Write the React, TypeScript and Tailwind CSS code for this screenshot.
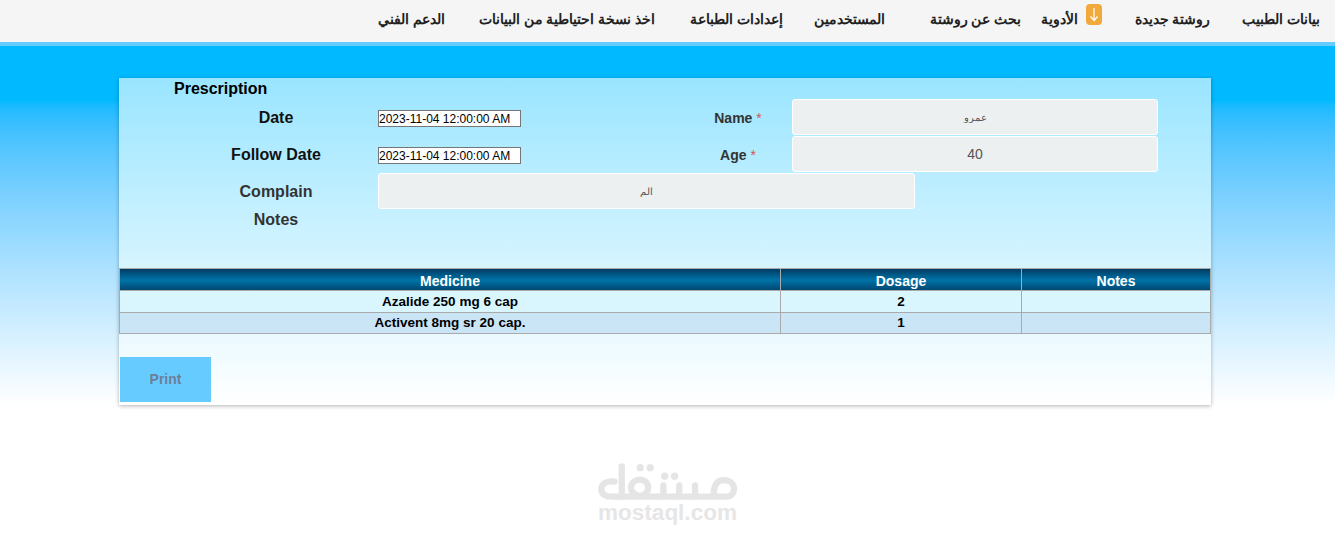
const navItems = [
  { label: "بيانات الطبيب", cls: "w-[82px] ml-[27px] justify-center" },
  { label: "روشتة جديدة", cls: "w-[81px] ml-[30px] justify-center" },
  { label: "الأدوية", cls: "w-[66px] ml-[25px] justify-start", badge: true },
  { label: "بحث عن روشتة", cls: "w-[71px] ml-[55px] justify-center" },
  { label: "المستخدمين", cls: "w-[72px] ml-[28px] justify-center" },
  { label: "إعدادات الطباعة", cls: "w-[97px] ml-[27px] justify-center" },
  { label: "اخذ نسخة احتياطية من البيانات", cls: "w-[188px] ml-[28px] justify-center" },
  { label: "الدعم الفني", cls: "w-[67px] justify-center" },
];

function DateField() {
  return (
    <input
      readOnly
      value="2023-11-04 12:00:00 AM"
      className="h-[17px] w-[143px] border border-[#767676] bg-white px-0 text-[12px] text-black outline-none"
    />
  );
}

function Field({ value, small, wide }: { value: string; small?: boolean; wide?: boolean }) {
  return (
    <input
      readOnly
      value={value}
      className={`${wide ? "w-[537px]" : "w-[366px]"} h-[36px] rounded-[3px] border border-white bg-[#ecf0f1] text-center text-[#555] outline-none ${
        small ? "text-[10px]" : "text-[14px]"
      }`}
    />
  );
}

function Logo() {
  return (
    <svg viewBox="50 28 424 124" className="h-[41px] w-[140px]" fill="none" stroke="#e5e5e5" strokeWidth="19" strokeLinecap="round" strokeLinejoin="round">
      <path d="M100 84C72 80 60 94 60 108C60 122 72 130 92 130H438C455 130 462 118 462 106C462 90 448 80 430 80C412 80 400 92 400 130" />
      <path d="M122 38V130" />
      <path d="M178 128C158 124 150 114 150 102C150 90 162 78 176 78C192 78 202 90 202 102C202 114 196 124 178 128" />
      <path d="M248 96V130M296 96V130M344 96V130" />
      <g fill="#e5e5e5" stroke="none">
        <circle cx="178" cy="42" r="11" />
        <circle cx="208" cy="42" r="11" />
        <circle cx="252" cy="68" r="11" />
        <circle cx="282" cy="68" r="11" />
      </g>
    </svg>
  );
}

export default function App() {
  return (
    <div className="min-h-[535px] overflow-hidden bg-white font-['Liberation_Sans',Arial,sans-serif]">
      <header dir="rtl" className="flex h-[46px] items-start border-b-4 border-[#66ccff] bg-[#f5f5f5] pr-[13px]">
        {navItems.map((item) => (
          <div
            key={item.label}
            className={`${item.cls} flex h-[42px] shrink-0 items-center gap-[8px] whitespace-nowrap text-[14px] font-bold text-[#222]`}
          >
            {item.badge && (
              <span className="mb-[13px] flex h-[21px] w-[16px] shrink-0 items-center justify-center rounded-[4px] bg-[#f0a93a]">
                <svg viewBox="0 0 16 21" className="h-[21px] w-[16px]" fill="none" stroke="#fff" strokeWidth="1.2">
                  <path d="M8 4V16M4.5 12.5L8 16.5L11.5 12.5" />
                </svg>
              </span>
            )}
            <span className="pb-[3px]">{item.label}</span>
          </div>
        ))}
      </header>

      <main className="h-[359px] bg-gradient-to-b from-[#00b9ff] from-[15%] to-white pl-[119px] pr-[124px] pt-[32px]">
        <section className="h-[327px] bg-gradient-to-b from-[#99e5ff] to-white shadow-[0_1px_4px_rgba(0,0,0,0.3)]">
          <h2 className="h-[21px] pl-[55px] text-[16px] font-bold leading-[22px] text-black">Prescription</h2>

          <div className="grid auto-rows-[37px] grid-cols-[259px_306px_108px_366px] items-start">
            <div className="flex h-[36px] items-center justify-center pl-[55px] pt-[2px] text-[16px] font-bold text-[#111]">Date</div>
            <div className="flex h-[28px] items-end"><DateField /></div>
            <div className="flex h-[36px] items-center justify-center pt-[2px] text-[14px] font-bold text-[#333]">
              <span>Name <span className="font-normal text-[#d9534f]">*</span></span>
            </div>
            <Field value="عمرو" small />

            <div className="flex h-[36px] items-center justify-center pl-[55px] pt-[2px] text-[16px] font-bold text-[#111]">Follow Date</div>
            <div className="flex h-[28px] items-end"><DateField /></div>
            <div className="flex h-[36px] items-center justify-center pt-[2px] text-[14px] font-bold text-[#333]">
              <span>Age <span className="font-normal text-[#d9534f]">*</span></span>
            </div>
            <Field value="40" />

            <div className="flex h-[36px] items-center justify-center pl-[55px] pt-[2px] text-[16px] font-bold text-[#333]">Complain</div>
            <div className="col-span-3"><Field value="الم" small wide /></div>
          </div>

          <div className="-mt-[1px] flex h-[22px] w-[259px] items-center justify-center pl-[55px] text-[16px] font-bold text-[#333]">Notes</div>

          <table className="mt-[37px] w-full table-fixed border-collapse text-center text-[13.5px] font-bold leading-[16px]">
            <colgroup>
              <col className="w-[661px]" />
              <col className="w-[241px]" />
              <col />
            </colgroup>
            <thead>
              <tr className="h-[22px] bg-gradient-to-b from-[#003c63] via-[#0073a8] to-[#00456e] text-[14px] text-white">
                <th className="border border-[#aaa] p-0 pt-[2px]">Medicine</th>
                <th className="border border-[#aaa] p-0 pt-[2px]">Dosage</th>
                <th className="border border-[#aaa] p-0 pt-[2px]">Notes</th>
              </tr>
            </thead>
            <tbody className="text-black">
              <tr className="h-[22px] bg-[#d9f6ff]">
                <td className="border border-[#aaa] p-0">Azalide 250 mg 6 cap</td>
                <td className="border border-[#aaa] p-0">2</td>
                <td className="border border-[#aaa] p-0"></td>
              </tr>
              <tr className="h-[21px] bg-[#c9e5f6]">
                <td className="border border-[#aaa] p-0">Activent 8mg sr 20 cap.</td>
                <td className="border border-[#aaa] p-0">1</td>
                <td className="border border-[#aaa] p-0"></td>
              </tr>
            </tbody>
          </table>

          <button className="ml-[1px] mt-[23px] block h-[45px] w-[91px] bg-[#66ccff] text-[14px] font-bold text-[#6d7f99]">Print</button>
        </section>
      </main>

      <footer className="flex flex-col items-center pt-[58px]">
        <Logo />
        <div className="-mt-[3px] text-[22.5px] font-bold leading-[24px] text-[#e6e6e6]">mostaql.com</div>
      </footer>
    </div>
  );
}
